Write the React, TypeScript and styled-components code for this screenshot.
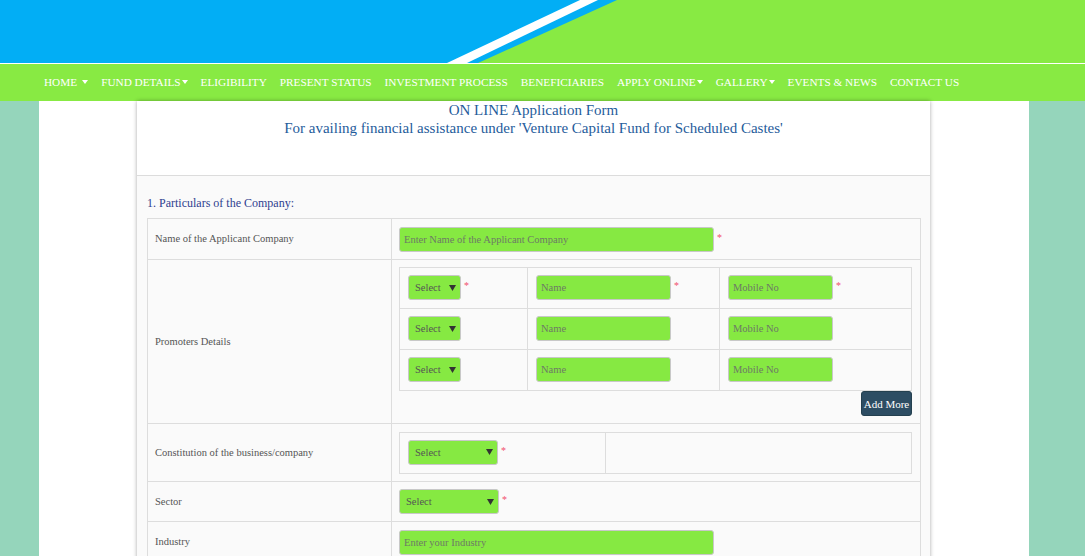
import React from "react";
import styled, { createGlobalStyle } from "styled-components";

const GlobalStyle = createGlobalStyle`
  html, body {
    margin: 0;
    padding: 0;
    background: #95d5bb;
    font-family: "Liberation Serif", "Times New Roman", serif;
  }
`;

const Banner = styled.header`
  height: 63px;
  background: #02aef5;
  border-bottom: 1px solid #fff;
  svg {
    display: block;
    width: 100%;
    height: 100%;
  }
`;

const NavBar = styled.nav`
  height: 37px;
  background: #88ea43;
  display: flex;
  align-items: center;
  padding-left: 44px;
  padding-bottom: 1px;
  box-sizing: border-box;
  gap: 13px;
`;

const NavItem = styled.a`
  color: #fff;
  font-size: 11.25px;
  text-transform: uppercase;
  text-decoration: none;
  white-space: nowrap;
  display: flex;
  align-items: center;
`;

const Caret = styled.span<{ $space?: boolean }>`
  display: inline-block;
  width: 0;
  height: 0;
  margin-left: ${(p) => (p.$space ? "5px" : "1px")};
  border-top: 4px solid #fff;
  border-left: 3px solid transparent;
  border-right: 3px solid transparent;
`;

const Page = styled.main`
  width: 990px;
  margin-left: 39px;
  background: #fff;
  padding: 0 99px 0 98px;
  box-sizing: border-box;
  min-height: 460px;
`;

const Panel = styled.section`
  box-shadow: 0 0 4px rgba(0, 0, 0, 0.35);
  background: #fafafa;
  min-height: 460px;
`;

const PanelHead = styled.div`
  background: #fff;
  height: 74px;
  border-bottom: 1px solid #dcdcdc;
  text-align: center;
  color: #1f5c9b;
  font-size: 15px;
  line-height: 18px;
`;

const PanelBody = styled.div`
  padding: 18px 9px 0 10px;
`;

const SectionTitle = styled.h3`
  margin: 0 0 6px;
  font-weight: normal;
  font-size: 12px;
  line-height: 18px;
  color: #2f3f8f;
`;

const FormTable = styled.table`
  width: 100%;
  border-collapse: collapse;
  font-size: 10.5px;
  color: #555;
`;

const LabelCell = styled.td`
  width: 228px;
  border: 1px solid #ddd;
  padding: 0 8px 0 7px;
  vertical-align: middle;
`;

const FieldCell = styled.td`
  border: 1px solid #ddd;
  padding: 7.5px 8px 7px 7px;
  vertical-align: top;
`;

const InnerTable = styled.table`
  width: 100%;
  border-collapse: collapse;
`;

const InnerCell = styled.td<{ $w?: number }>`
  border: 1px solid #ddd;
  padding: 7px 8px 8px;
  width: ${(p) => (p.$w ? `${p.$w}px` : "auto")};
  height: 25px;
`;

const Field = styled.div`
  display: flex;
  align-items: center;
`;

const TextInput = styled.input<{ $w: number }>`
  width: ${(p) => p.$w}px;
  height: 25px;
  box-sizing: border-box;
  background: #86e942;
  border: 1px solid #c8c8c8;
  border-radius: 3px;
  padding: 0 4px;
  font-family: inherit;
  font-size: 10.5px;
  color: #333;
  &::placeholder {
    color: #6d7a66;
  }
`;

const SelectBox = styled.div<{ $w: number }>`
  width: ${(p) => p.$w}px;
  height: 25px;
  box-sizing: border-box;
  background: #86e942;
  border: 1px solid #c8c8c8;
  border-radius: 3px;
  padding: 0 4px 0 6px;
  display: flex;
  align-items: center;
  justify-content: space-between;
  font-size: 10.5px;
  color: #555;
  svg {
    display: block;
  }
`;

const Req = styled.span`
  color: #f2506e;
  font-size: 10px;
  margin-left: 3px;
  margin-top: -4px;
`;

const ActionRow = styled.div`
  display: flex;
  justify-content: flex-end;
`;

const AddButton = styled.button`
  height: 25px;
  width: 51px;
  padding: 0;
  background: #2d4d63;
  border: 1px solid #24404f;
  border-radius: 3px;
  color: #fff;
  font-family: inherit;
  font-size: 11px;
`;

const Arrow = () => (
  <svg width="7" height="6" viewBox="0 0 7 6">
    <path d="M0 0 H7 L3.5 6 Z" fill="#333" />
  </svg>
);

const Select = ({ w, req }: { w: number; req?: boolean }) => (
  <Field>
    <SelectBox $w={w}>
      <span>Select</span>
      <Arrow />
    </SelectBox>
    {req && <Req>*</Req>}
  </Field>
);

const Input = ({ w, ph, req }: { w: number; ph: string; req?: boolean }) => (
  <Field>
    <TextInput $w={w} placeholder={ph} />
    {req && <Req>*</Req>}
  </Field>
);

const navItems: [string, boolean, boolean?][] = [
  ["Home", true, true],
  ["Fund Details", true],
  ["Eligibility", false],
  ["Present Status", false],
  ["Investment Process", false],
  ["Beneficiaries", false],
  ["Apply Online", true],
  ["Gallery", true],
  ["Events & News", false],
  ["Contact Us", false],
];

export default function App() {
  return (
    <>
      <GlobalStyle />
      <Banner>
        <svg viewBox="0 0 1085 63" preserveAspectRatio="none">
          <polygon points="447,63 467,63 598,0 580,0" fill="#fff" />
          <polygon points="478,63 1085,63 1085,0 617,0" fill="#88ea43" />
        </svg>
      </Banner>
      <NavBar>
        {navItems.map(([label, caret, space]) => (
          <NavItem key={label} href="#">
            {label}
            {caret && <Caret $space={space} />}
          </NavItem>
        ))}
      </NavBar>
      <Page>
        <Panel>
          <PanelHead>
            ON LINE Application Form
            <br />
            For availing financial assistance under 'Venture Capital Fund for Scheduled Castes'
          </PanelHead>
          <PanelBody>
            <SectionTitle>1. Particulars of the Company:</SectionTitle>
            <FormTable>
              <tbody>
                <tr>
                  <LabelCell>Name of the Applicant Company</LabelCell>
                  <FieldCell>
                    <Input w={315} ph="Enter Name of the Applicant Company" req />
                  </FieldCell>
                </tr>
                <tr>
                  <LabelCell>Promoters Details</LabelCell>
                  <FieldCell>
                    <InnerTable>
                      <tbody>
                        {[true, false, false].map((req, i) => (
                          <tr key={i}>
                            <InnerCell $w={111}>
                              <Select w={53} req={req} />
                            </InnerCell>
                            <InnerCell $w={175}>
                              <Input w={135} ph="Name" req={req} />
                            </InnerCell>
                            <InnerCell>
                              <Input w={105} ph="Mobile No" req={req} />
                            </InnerCell>
                          </tr>
                        ))}
                      </tbody>
                    </InnerTable>
                    <ActionRow>
                      <AddButton>Add More</AddButton>
                    </ActionRow>
                  </FieldCell>
                </tr>
                <tr>
                  <LabelCell>Constitution of the business/company</LabelCell>
                  <FieldCell>
                    <InnerTable>
                      <tbody>
                        <tr>
                          <InnerCell $w={189}>
                            <Select w={90} req />
                          </InnerCell>
                          <InnerCell />
                        </tr>
                      </tbody>
                    </InnerTable>
                  </FieldCell>
                </tr>
                <tr>
                  <LabelCell>Sector</LabelCell>
                  <FieldCell>
                    <Select w={100} req />
                  </FieldCell>
                </tr>
                <tr>
                  <LabelCell>Industry</LabelCell>
                  <FieldCell>
                    <Input w={315} ph="Enter your Industry" />
                  </FieldCell>
                </tr>
              </tbody>
            </FormTable>
          </PanelBody>
        </Panel>
      </Page>
    </>
  );
}
